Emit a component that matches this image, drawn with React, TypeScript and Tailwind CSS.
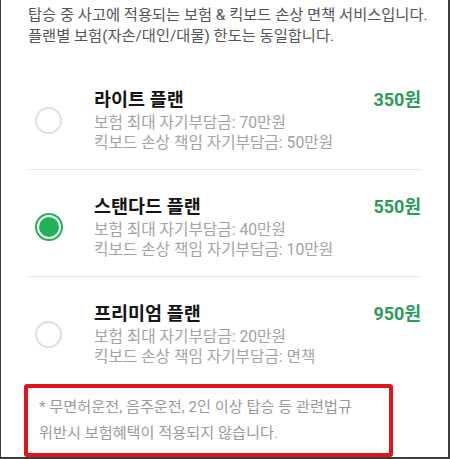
const plans = [
  { name: '라이트 플랜', price: '350원', max: '70만원', board: '50만원', selected: false },
  { name: '스탠다드 플랜', price: '550원', max: '40만원', board: '10만원', selected: true },
  { name: '프리미엄 플랜', price: '950원', max: '20만원', board: '면책', selected: false },
];

function Radio({ checked }: { checked: boolean }) {
  if (checked) {
    return (
      <div className="flex h-[28px] w-[28px] items-center justify-center rounded-full border-[2px] border-[#1fb257] bg-white">
        <div className="h-[20px] w-[20px] rounded-full bg-[#1fb257]" />
      </div>
    );
  }
  return <div className="h-[27px] w-[27px] rounded-full border-[2px] border-[#dedede] bg-white" />;
}

export default function App() {
  return (
    <div
      className="h-[459px] w-[450px] overflow-hidden border-b-2 border-l-[1.5px] border-r-2 border-[#3c3c3c] bg-white"
      style={{ fontFamily: 'Roboto, "Noto Sans CJK KR", sans-serif' }}
    >
      {/* 안내 */}
      <div className="pl-[27px] pt-[5px] text-[15.3px] leading-[21px] text-[#555555]">
        <p className="whitespace-nowrap">탑승 중 사고에 적용되는 보험 &amp; 킥보드 손상 면책 서비스입니다.</p>
        <p>플랜별 보험(자손/대인/대물) 한도는 동일합니다.</p>
      </div>

      {/* 플랜 목록 */}
      <div className="mt-[16px] px-[27px]">
        {plans.map((plan, i) => (
          <div
            key={plan.name}
            className={`flex items-center pt-[25px] pb-[17px] ${
              i < plans.length - 1 ? 'border-b border-[#e6e6e6]' : ''
            }`}
          >
            <div className="flex w-[66px] shrink-0 pl-[7px]">
              <Radio checked={plan.selected} />
            </div>
            <div className="flex-1">
              <div className="flex items-center justify-between">
                <p className="text-[18.5px] font-bold leading-[24px] text-[#151515]">{plan.name}</p>
                <p className="text-[18px] font-bold leading-[24px] text-[#2a9c58]">{plan.price}</p>
              </div>
              <div className="mt-[1px] text-[15.7px] leading-[19.5px] text-[#a3a3a3]">
                <p>보험 최대 자기부담금: {plan.max}</p>
                <p>킥보드 손상 책임 자기부담금: {plan.board}</p>
              </div>
            </div>
          </div>
        ))}
      </div>

      {/* 주의 */}
      <div className="ml-[23px] mt-[1px] w-[369px] rounded-[3px] border-[4px] border-[#e0141c] pl-[11px] pt-[6px] pb-[7px] text-[15.2px] leading-[26px] text-[#9a9a9a]">
        <p className="whitespace-nowrap">* 무면허운전, 음주운전, 2인 이상 탑승 등 관련법규</p>
        <p>위반시 보험혜택이 적용되지 않습니다.</p>
      </div>
    </div>
  );
}
